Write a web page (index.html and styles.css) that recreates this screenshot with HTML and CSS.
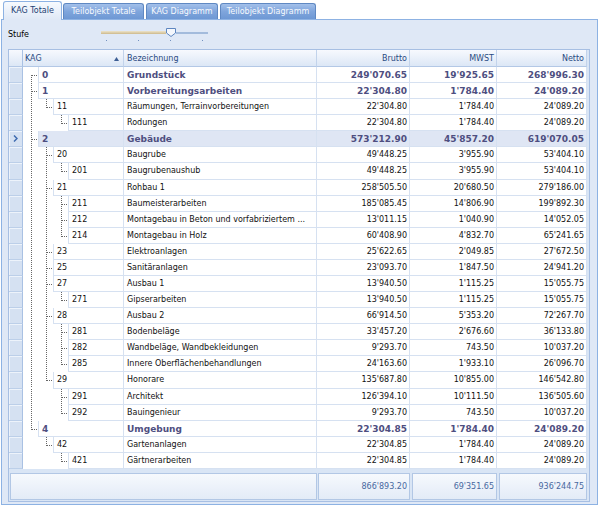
FILE: index.html
```html
<!DOCTYPE html>
<html>
<head>
<meta charset="utf-8">
<link rel="stylesheet" href="styles.css">
</head>
<body>
<svg class="defs" aria-hidden="true">
  <symbol id="v" viewBox="0 0 15 16"><path d="M8.5 0V16"/></symbol>
  <symbol id="t" viewBox="0 0 15 16"><path d="M8.5 0V16M9 8.5H15"/></symbol>
  <symbol id="e" viewBox="0 0 15 16"><path d="M8.5 0V9M9 8.5H15"/></symbol>
  <symbol id="f" viewBox="0 0 15 16"><path d="M8.5 8V16M9 8.5H15"/></symbol>
</svg>
<div class="tabs">
  <div class="tab on t1">KAG Totale</div>
  <div class="tab t2">Teilobjekt Totale</div>
  <div class="tab t3">KAG Diagramm</div>
  <div class="tab t4">Teilobjekt Diagramm</div>
</div>
<div class="panel">
  <div class="tool">
    <div class="lbl">Stufe</div>
    <div class="slider">
      <div class="track">
        <div class="tr-left"></div>
        <svg class="thumb" viewBox="0 0 10 9"><path d="M0.5 0.5H9.5V5L5 8.5L0.5 5Z"/></svg>
        <div class="tr-right"></div>
      </div>
      <div class="ticks"><i></i><i></i><i></i><i></i></div>
    </div>
  </div>
  <div class="grid">
    <div class="hdr">
      <div class="hi"></div>
      <div class="hk"><span>KAG</span><svg class="sort" viewBox="0 0 5 4"><path d="M0 4L2.5 0L5 4Z"/></svg></div>
      <div>Bezeichnung</div>
      <div class="n">Brutto</div>
      <div class="n">MWST</div>
      <div class="n">Netto</div>
    </div>
    <div class="body">
      <div class="row b"><div class="ind"></div><div class="kag"><svg class="slot"><use href="#f"/></svg><div class="node">0</div></div><div class="c">Grundstück</div><div class="c n">249'070.65</div><div class="c n">19'925.65</div><div class="c n">268'996.30</div></div>
      <div class="row b"><div class="ind"></div><div class="kag"><svg class="slot"><use href="#t"/></svg><div class="node">1</div></div><div class="c">Vorbereitungsarbeiten</div><div class="c n">22'304.80</div><div class="c n">1'784.40</div><div class="c n">24'089.20</div></div>
      <div class="row"><div class="ind"></div><div class="kag"><svg class="slot"><use href="#v"/></svg><svg class="slot"><use href="#e"/></svg><div class="node">11</div></div><div class="c">Räumungen, Terrainvorbereitungen</div><div class="c n">22'304.80</div><div class="c n">1'784.40</div><div class="c n">24'089.20</div></div>
      <div class="row"><div class="ind"></div><div class="kag"><svg class="slot"><use href="#v"/></svg><svg class="slot"></svg><svg class="slot"><use href="#e"/></svg><div class="node">111</div></div><div class="c">Rodungen</div><div class="c n">22'304.80</div><div class="c n">1'784.40</div><div class="c n">24'089.20</div></div>
      <div class="row b sel"><div class="ind"><svg class="chev" viewBox="0 0 5 7"><path d="M1 0.5L4 3.5L1 6.5"/></svg></div><div class="kag"><svg class="slot"><use href="#t"/></svg><div class="node">2</div></div><div class="c">Gebäude</div><div class="c n">573'212.90</div><div class="c n">45'857.20</div><div class="c n">619'070.05</div></div>
      <div class="row"><div class="ind"></div><div class="kag"><svg class="slot"><use href="#v"/></svg><svg class="slot"><use href="#t"/></svg><div class="node">20</div></div><div class="c">Baugrube</div><div class="c n">49'448.25</div><div class="c n">3'955.90</div><div class="c n">53'404.10</div></div>
      <div class="row"><div class="ind"></div><div class="kag"><svg class="slot"><use href="#v"/></svg><svg class="slot"><use href="#v"/></svg><svg class="slot"><use href="#e"/></svg><div class="node">201</div></div><div class="c">Baugrubenaushub</div><div class="c n">49'448.25</div><div class="c n">3'955.90</div><div class="c n">53'404.10</div></div>
      <div class="row"><div class="ind"></div><div class="kag"><svg class="slot"><use href="#v"/></svg><svg class="slot"><use href="#t"/></svg><div class="node">21</div></div><div class="c">Rohbau 1</div><div class="c n">258'505.50</div><div class="c n">20'680.50</div><div class="c n">279'186.00</div></div>
      <div class="row"><div class="ind"></div><div class="kag"><svg class="slot"><use href="#v"/></svg><svg class="slot"><use href="#v"/></svg><svg class="slot"><use href="#t"/></svg><div class="node">211</div></div><div class="c">Baumeisterarbeiten</div><div class="c n">185'085.45</div><div class="c n">14'806.90</div><div class="c n">199'892.30</div></div>
      <div class="row"><div class="ind"></div><div class="kag"><svg class="slot"><use href="#v"/></svg><svg class="slot"><use href="#v"/></svg><svg class="slot"><use href="#t"/></svg><div class="node">212</div></div><div class="c">Montagebau in Beton und vorfabriziertem ...</div><div class="c n">13'011.15</div><div class="c n">1'040.90</div><div class="c n">14'052.05</div></div>
      <div class="row"><div class="ind"></div><div class="kag"><svg class="slot"><use href="#v"/></svg><svg class="slot"><use href="#v"/></svg><svg class="slot"><use href="#e"/></svg><div class="node">214</div></div><div class="c">Montagebau in Holz</div><div class="c n">60'408.90</div><div class="c n">4'832.70</div><div class="c n">65'241.65</div></div>
      <div class="row"><div class="ind"></div><div class="kag"><svg class="slot"><use href="#v"/></svg><svg class="slot"><use href="#t"/></svg><div class="node">23</div></div><div class="c">Elektroanlagen</div><div class="c n">25'622.65</div><div class="c n">2'049.85</div><div class="c n">27'672.50</div></div>
      <div class="row"><div class="ind"></div><div class="kag"><svg class="slot"><use href="#v"/></svg><svg class="slot"><use href="#t"/></svg><div class="node">25</div></div><div class="c">Sanitäranlagen</div><div class="c n">23'093.70</div><div class="c n">1'847.50</div><div class="c n">24'941.20</div></div>
      <div class="row"><div class="ind"></div><div class="kag"><svg class="slot"><use href="#v"/></svg><svg class="slot"><use href="#t"/></svg><div class="node">27</div></div><div class="c">Ausbau 1</div><div class="c n">13'940.50</div><div class="c n">1'115.25</div><div class="c n">15'055.75</div></div>
      <div class="row"><div class="ind"></div><div class="kag"><svg class="slot"><use href="#v"/></svg><svg class="slot"><use href="#v"/></svg><svg class="slot"><use href="#e"/></svg><div class="node">271</div></div><div class="c">Gipserarbeiten</div><div class="c n">13'940.50</div><div class="c n">1'115.25</div><div class="c n">15'055.75</div></div>
      <div class="row"><div class="ind"></div><div class="kag"><svg class="slot"><use href="#v"/></svg><svg class="slot"><use href="#t"/></svg><div class="node">28</div></div><div class="c">Ausbau 2</div><div class="c n">66'914.50</div><div class="c n">5'353.20</div><div class="c n">72'267.70</div></div>
      <div class="row"><div class="ind"></div><div class="kag"><svg class="slot"><use href="#v"/></svg><svg class="slot"><use href="#v"/></svg><svg class="slot"><use href="#t"/></svg><div class="node">281</div></div><div class="c">Bodenbeläge</div><div class="c n">33'457.20</div><div class="c n">2'676.60</div><div class="c n">36'133.80</div></div>
      <div class="row"><div class="ind"></div><div class="kag"><svg class="slot"><use href="#v"/></svg><svg class="slot"><use href="#v"/></svg><svg class="slot"><use href="#t"/></svg><div class="node">282</div></div><div class="c">Wandbeläge, Wandbekleidungen</div><div class="c n">9'293.70</div><div class="c n">743.50</div><div class="c n">10'037.20</div></div>
      <div class="row"><div class="ind"></div><div class="kag"><svg class="slot"><use href="#v"/></svg><svg class="slot"><use href="#v"/></svg><svg class="slot"><use href="#e"/></svg><div class="node">285</div></div><div class="c">Innere Oberflächenbehandlungen</div><div class="c n">24'163.60</div><div class="c n">1'933.10</div><div class="c n">26'096.70</div></div>
      <div class="row"><div class="ind"></div><div class="kag"><svg class="slot"><use href="#v"/></svg><svg class="slot"><use href="#e"/></svg><div class="node">29</div></div><div class="c">Honorare</div><div class="c n">135'687.80</div><div class="c n">10'855.00</div><div class="c n">146'542.80</div></div>
      <div class="row"><div class="ind"></div><div class="kag"><svg class="slot"><use href="#v"/></svg><svg class="slot"></svg><svg class="slot"><use href="#t"/></svg><div class="node">291</div></div><div class="c">Architekt</div><div class="c n">126'394.10</div><div class="c n">10'111.50</div><div class="c n">136'505.60</div></div>
      <div class="row"><div class="ind"></div><div class="kag"><svg class="slot"><use href="#v"/></svg><svg class="slot"></svg><svg class="slot"><use href="#e"/></svg><div class="node">292</div></div><div class="c">Bauingenieur</div><div class="c n">9'293.70</div><div class="c n">743.50</div><div class="c n">10'037.20</div></div>
      <div class="row b"><div class="ind"></div><div class="kag"><svg class="slot"><use href="#e"/></svg><div class="node">4</div></div><div class="c">Umgebung</div><div class="c n">22'304.85</div><div class="c n">1'784.40</div><div class="c n">24'089.20</div></div>
      <div class="row"><div class="ind"></div><div class="kag"><svg class="slot"></svg><svg class="slot"><use href="#e"/></svg><div class="node">42</div></div><div class="c">Gartenanlagen</div><div class="c n">22'304.85</div><div class="c n">1'784.40</div><div class="c n">24'089.20</div></div>
      <div class="row"><div class="ind"></div><div class="kag"><svg class="slot"></svg><svg class="slot"></svg><svg class="slot"><use href="#e"/></svg><div class="node">421</div></div><div class="c">Gärtnerarbeiten</div><div class="c n">22'304.85</div><div class="c n">1'784.40</div><div class="c n">24'089.20</div></div>
    </div>
    <div class="fill"></div>
    <div class="foot">
      <div class="fc f1"></div>
      <div class="fc f2">866'893.20</div>
      <div class="fc f3">69'351.65</div>
      <div class="fc f4">936'244.75</div>
    </div>
  </div>
</div>
</body>
</html>
```

FILE: styles.css
```css
* { box-sizing: border-box; }
html, body { margin: 0; }
body {
  background: #fff;
  font-family: "DejaVu Sans", Verdana, sans-serif;
  font-size: 8px;
  color: #000;
  width: 600px;
  height: 508px;
  overflow: hidden;
}
.defs { display: block; width: 0; height: 0; overflow: hidden; }

/* tabs */
.tabs {
  display: flex;
  align-items: flex-end;
  width: 597px;
  height: 20px;
  margin-left: 1px;
  padding-left: 2px;
  border-bottom: 1px solid #8db2e3;
}
.tab {
  height: 16px;
  margin-right: 2px;
  padding-bottom: 1px;
  border: 1px solid #5f88c2;
  border-bottom: 0;
  border-radius: 3px 3px 0 0;
  background: linear-gradient(#a3c0ea, #7fa5dc 50%, #6e98d4);
  color: #f7f9fd;
  display: flex;
  align-items: center;
  justify-content: center;
  white-space: nowrap;
  flex: none;
}
.tab.on {
  height: 19px;
  margin-bottom: -1px;
  margin-right: 1px;
  border-color: #8db2e3;
  background: linear-gradient(#f7fafe, #dfe8f6);
  color: #1e3f73;
}
.t1 { width: 59px; }
.t2 { width: 81px; }
.t3 { width: 72px; }
.t4 { width: 96px; }

/* panel */
.panel {
  width: 597px;
  height: 485px;
  margin-left: 1px;
  border: 1px solid #8db2e3;
  border-top: 0;
  background: #dfe8f6;
  padding-left: 6px;
}
.tool { display: flex; height: 29px; }
.lbl { width: 93px; margin-top: 10px; line-height: 10px; color: #000; }
.slider { margin-top: 8px; width: 107px; }
.track { display: flex; align-items: center; height: 9px; }
.tr-left { width: 65px; height: 3px; background: linear-gradient(#ede4cc, #cdb98b); }
.thumb { width: 10px; height: 9px; flex: none; display: block; fill: #f4f7fc; stroke: #5e86c0; stroke-width: 1; }
.tr-right { width: 32px; height: 2px; background: #a3bbdc; }
.ticks { display: flex; gap: 31px; padding-left: 5px; margin-top: 3px; }
.ticks i { width: 1px; height: 1px; background: #7391c0; }

/* grid */
.grid {
  width: 582px;
  height: 453px;
  border: 1px solid #a7bfe3;
  background: #d9e5f5;
  display: flex;
  flex-direction: column;
}
.hdr, .row {
  display: grid;
  grid-template-columns: 14px 101px 193px 93px 87px 90px;
  flex: none;
}
.hdr { height: 17px; }
.hdr > div {
  background: linear-gradient(#f7f9fe, #dce7f6);
  border-right: 1px solid #c2d3eb;
  border-bottom: 1px solid #b3c8e6;
  color: #2a4b82;
  line-height: 15px;
  padding: 1px 2px 0 3px;
  white-space: nowrap;
}
.hdr > .hk {
  display: flex;
  align-items: center;
  justify-content: space-between;
  padding: 1px 4px 0 2px;
}
.sort { width: 5px; height: 4px; fill: #3d5e94; }
.hdr > .hi { border-right-color: #a9c1e3; }
.n { text-align: right; }

.body { height: 402px; flex: none; }
.row { height: 16.08px; }
.ind {
  background: #d5e1f2;
  border-right: 1px solid #a9c1e3;
  border-bottom: 1px solid #bccfe9;
  box-shadow: inset 1px 1px #edf3fb;
  display: flex;
  align-items: center;
  justify-content: center;
}
.chev { width: 5px; height: 7px; fill: none; stroke: #3f6cb0; stroke-width: 1.5; }
.kag { display: flex; background: #fff; }
.slot {
  width: 15px;
  height: 16px;
  flex: none;
  display: block;
  fill: none;
  stroke: #666;
  stroke-width: 1;
  stroke-dasharray: 1 1;
  shape-rendering: crispEdges;
}
.node, .c {
  border-bottom: 1px solid #d6e1f1;
  border-right: 1px solid #d6e1f1;
  line-height: 14px;
  padding-top: 1px;
  white-space: nowrap;
  overflow: hidden;
  text-overflow: ellipsis;
  background: #fff;
  color: #111;
}
.node { flex: 1; border-left: 1px solid #d6e1f1; padding-left: 3px; }
.c { padding-left: 3px; padding-right: 2px; }
.row.b .node, .row.b .c { font-weight: bold; font-size: 9px; color: #4e4e80; }
.row.sel .node, .row.sel .c { background: #dfe6f4; }

.fill { flex: 1; }
.foot { height: 30px; display: flex; padding: 2px 0 1px 1px; flex: none; }
.fc {
  height: 27px;
  border: 1px solid #b2c7e5;
  background: linear-gradient(#f6f9fd, #e3ebf7);
  color: #4868a0;
  text-align: right;
  line-height: 25px;
  padding-right: 2px;
  flex: none;
}
.f1 { width: 307px; margin-right: 1px; }
.f2 { width: 92px; margin-right: 2px; }
.f3 { width: 85px; margin-right: 2px; }
.f4 { width: 88px; }
```
